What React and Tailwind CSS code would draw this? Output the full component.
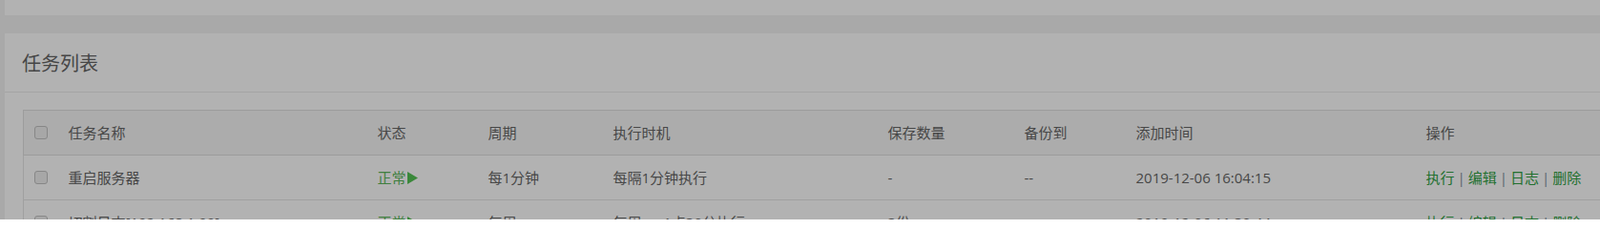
import React from "react";

const cols = [
  { w: "w-[37px]" },
  { w: "w-[324px]", label: "任务名称" },
  { w: "w-[116px]", label: "状态" },
  { w: "w-[131px]", label: "周期" },
  { w: "w-[288px]", label: "执行时机" },
  { w: "w-[143px]", label: "保存数量" },
  { w: "w-[117px]", label: "备份到" },
  { w: "w-[304px]", label: "添加时间" },
  { w: "w-[300px]", label: "操作" },
];

const rows = [
  {
    name: "重启服务器",
    cycle: "每1分钟",
    when: "每隔1分钟执行",
    save: "-",
    backup: "--",
    added: "2019-12-06 16:04:15",
  },
  {
    name: "切割日志[192.168.1.99]",
    cycle: "每周",
    when: "每周一, 1点30分执行",
    save: "3份",
    backup: "--",
    added: "2019-12-06 11:30:44",
  },
];

const Checkbox = () => (
  <span className="block w-[14px] h-[14px] rounded-[3px] border border-[#878787] bg-[#a7a7a7]" />
);

const Status = () => (
  <span className="inline-flex items-center text-[#3f7f3f]">
    正常
    <svg width="11" height="13" viewBox="0 0 11 13" className="ml-[1px]">
      <polygon points="0,0 11,6.5 0,13" fill="#3a883a" />
    </svg>
  </span>
);

const Actions = () => {
  const items = ["执行", "编辑", "日志", "删除"];
  return (
    <span className="text-[#22702f] whitespace-nowrap">
      {items.map((t, i) => (
        <React.Fragment key={t}>
          {i > 0 && <span className="text-[#56626e] px-[3px]">|</span>}
          {t}
        </React.Fragment>
      ))}
    </span>
  );
};

export default function App() {
  return (
    <div
      className="w-[1677px] h-[230px] overflow-hidden bg-[#a9a9a9] pl-[5px]"
      style={{ fontFamily: '"Open Sans", "Noto Sans CJK SC", sans-serif' }}
    >
      <div className="w-[1900px] h-[16px] bg-[#b2b2b2]" />
      <div className="h-[19px]" />
      <div className="w-[1900px] h-[300px] bg-[#b2b2b2]">
        <div className="h-[62px] border-b border-[#a4a4a4] flex items-center pl-[18px] pt-[2px]">
          <h2 className="text-[20px] text-[#464646] font-normal">任务列表</h2>
        </div>
        <div className="pt-[18px] pl-[19px]">
          <table className="w-[1760px] table-fixed border-collapse text-[15px] text-[#474747]">
            <colgroup>
              {cols.map((c, i) => (
                <col key={i} className={c.w} />
              ))}
            </colgroup>
            <thead>
              <tr className="bg-[#acacac] h-[47px] border border-[#9c9c9c]">
                {cols.map((c, i) => (
                  <th
                    key={i}
                    className={`text-left font-normal ${i === 0 ? "pl-[11px]" : "pl-[10px]"}`}
                  >
                    {i === 0 ? <Checkbox /> : c.label}
                  </th>
                ))}
              </tr>
            </thead>
            <tbody>
              {rows.map((r) => (
                <tr key={r.name} className="h-[47px] border border-[#a0a0a0]">
                  <td className="pl-[11px]">
                    <Checkbox />
                  </td>
                  <td className="pl-[10px]">{r.name}</td>
                  <td className="pl-[10px]">
                    <Status />
                  </td>
                  <td className="pl-[10px]">{r.cycle}</td>
                  <td className="pl-[10px]">{r.when}</td>
                  <td className="pl-[10px]">{r.save}</td>
                  <td className="pl-[10px]">{r.backup}</td>
                  <td className="pl-[10px]">{r.added}</td>
                  <td className="pl-[10px]">
                    <Actions />
                  </td>
                </tr>
              ))}
            </tbody>
          </table>
        </div>
      </div>
    </div>
  );
}
